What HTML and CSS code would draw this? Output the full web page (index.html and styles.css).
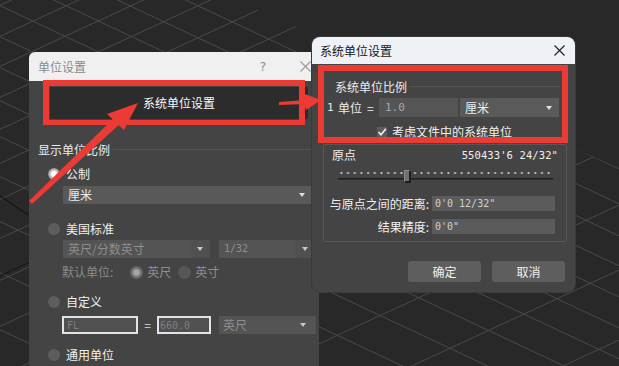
FILE: index.html
```html
<!DOCTYPE html>
<html lang="zh-CN">
<head>
<meta charset="utf-8">
<title>单位设置</title>
<link rel="stylesheet" href="styles.css">
</head>
<body>
<div class="desk">
  <svg class="grid" width="619" height="366" viewBox="0 0 619 366">
    <defs>
      <clipPath id="floor"><polygon points="0,0 235,0 619,168 619,366 0,366"/></clipPath>
    </defs>
    <g clip-path="url(#floor)" stroke="#4a4a4a" stroke-width="1" fill="none">
      <line x1="-10" y1="-292" x2="630" y2="9"/>
      <line x1="-10" y1="-247" x2="630" y2="54"/>
      <line x1="-10" y1="-204" x2="630" y2="97"/>
      <line x1="-10" y1="-164" x2="630" y2="137"/>
      <line x1="-10" y1="-127" x2="630" y2="174"/>
      <line x1="-10" y1="-92" x2="630" y2="209"/>
      <line x1="-10" y1="-60" x2="630" y2="241"/>
      <line x1="-10" y1="-30" x2="630" y2="271"/>
      <line x1="-10" y1="1" x2="630" y2="302"/>
      <line x1="-10" y1="32" x2="630" y2="333"/>
      <line x1="-10" y1="63" x2="630" y2="364"/>
      <line x1="-10" y1="96" x2="630" y2="397"/>
      <line x1="-10" y1="132" x2="630" y2="433"/>
      <line x1="-10" y1="172" x2="630" y2="473"/>
      <line x1="-10" y1="217" x2="630" y2="518"/>
      <line x1="-10" y1="268" x2="630" y2="569"/>
      <line x1="-10" y1="325" x2="630" y2="626"/>
      <line x1="-10" y1="10" x2="630" y2="-286"/>
      <line x1="-10" y1="41" x2="630" y2="-255"/>
      <line x1="-10" y1="71" x2="630" y2="-225"/>
      <line x1="-10" y1="102" x2="630" y2="-194"/>
      <line x1="-10" y1="134" x2="630" y2="-162"/>
      <line x1="-10" y1="168" x2="630" y2="-128"/>
      <line x1="-10" y1="204" x2="630" y2="-92"/>
      <line x1="-10" y1="243" x2="630" y2="-53"/>
      <line x1="-10" y1="285" x2="630" y2="-11"/>
      <line x1="-10" y1="331" x2="630" y2="35"/>
      <line x1="-10" y1="381" x2="630" y2="85"/>
      <line x1="-10" y1="436" x2="630" y2="140"/>
      <line x1="-10" y1="496" x2="630" y2="200"/>
      <line x1="-10" y1="561" x2="630" y2="265"/>
      <line x1="-10" y1="631" x2="630" y2="335"/>
      <line x1="-10" y1="705" x2="630" y2="409"/>
    </g>
    <line x1="0" y1="196" x2="30" y2="216" stroke="#0e0e0e" stroke-width="1"/>
    <line x1="0" y1="276" x2="30" y2="262" stroke="#161616" stroke-width="1"/>
  </svg>

  <section class="dlg dlg-units">
    <header class="titlebar tb-units">
      <span class="tb-title">单位设置</span>
      <span class="tb-help">?</span>
      <svg class="tb-close tb-close-dim" width="11" height="11" viewBox="0 0 11 11"><path d="M0.5 0.5 L10.5 10.5 M10.5 0.5 L0.5 10.5" stroke="#9a9a9a" stroke-width="1.2" fill="none"/></svg>
    </header>
    <div class="units-body">
      <div class="sysbtn">系统单位设置</div>
      <div class="group-head gh-display"><span>显示单位比例</span></div>
      <div class="radio-row r-metric"><i class="radio on"></i><span>公制</span></div>
      <div class="combo combo-metric"><span>厘米</span><b class="caret"></b></div>
      <div class="radio-row r-us"><i class="radio"></i><span>美国标准</span></div>
      <div class="combo-row">
        <div class="combo dis combo-frac"><span>英尺/分数英寸</span><b class="caret-box"><b class="caret"></b></b></div>
        <div class="combo dis combo-32"><span class="mono">1/32</span><b class="caret-box"><b class="caret"></b></b></div>
      </div>
      <div class="default-row">
        <span class="def-label">默认单位:</span>
        <i class="radio dim-on"></i><span class="def-opt">英尺</span>
        <i class="radio dim"></i><span class="def-opt">英寸</span>
      </div>
      <div class="radio-row r-custom"><i class="radio"></i><span>自定义</span></div>
      <div class="custom-row">
        <div class="field f-fl mono">FL</div>
        <span class="eq">=</span>
        <div class="field f-660 mono">660.0</div>
        <div class="combo dis combo-ft"><span>英尺</span><b class="caret"></b></div>
      </div>
      <div class="radio-row r-generic"><i class="radio"></i><span>通用单位</span></div>
    </div>
    <div class="mark mark-a"></div>
  </section>

  <section class="dlg dlg-sys">
    <header class="titlebar tb-sys">
      <span class="tb-title">系统单位设置</span>
      <svg class="tb-close" width="11" height="11" viewBox="0 0 11 11"><path d="M0.5 0.5 L10.5 10.5 M10.5 0.5 L0.5 10.5" stroke="#222" stroke-width="1.2" fill="none"/></svg>
    </header>
    <div class="sys-body">
      <div class="group-head gh-scale"><span>系统单位比例</span></div>
      <div class="scale-row">
        <span class="mono one">1</span>
        <span class="unit">单位</span>
        <span class="eq2">=</span>
        <div class="field f-scale mono">1.0</div>
        <div class="combo combo-cm"><span>厘米</span><b class="caret"></b></div>
      </div>
      <div class="check-row">
        <i class="check"><svg width="10" height="10" viewBox="0 0 10 10"><path d="M1.5 5 L4 7.8 L8.8 1.8" stroke="#f2f2f2" stroke-width="1.6" fill="none"/></svg></i>
        <span>考虑文件中的系统单位</span>
      </div>
      <div class="origin-box">
        <div class="origin-row"><span>原点</span><span class="mono big">550433'6 24/32"</span></div>
        <div class="slider"><i class="thumb"></i></div>
        <div class="kv-row"><span class="kv-label">与原点之间的距离:</span><div class="field f-kv mono">0'0 12/32"</div></div>
        <div class="kv-row kv-2"><span class="kv-label">结果精度:</span><div class="field f-kv mono">0'0"</div></div>
      </div>
      <div class="btn-row">
        <div class="btn">确定</div>
        <div class="btn">取消</div>
      </div>
    </div>
    <div class="mark mark-b"></div>
  </section>

  <svg class="arrows" width="619" height="366" viewBox="0 0 619 366">
    <polygon points="29,201 32,204 121,123 115,117" fill="#ec3a35"/>
    <polygon points="107,114 138,103 124,130" fill="#ec3a35"/>
    <polygon points="279,102 279,105 306,104 306,100" fill="#ec3a35"/>
    <polygon points="302,93 321,100 306,110" fill="#ec3a35"/>
  </svg>
</div>
</body>
</html>
```

FILE: styles.css
```css
* { box-sizing: border-box; }
html, body { margin: 0; padding: 0; }
body {
  width: 619px;
  height: 366px;
  overflow: hidden;
  background: #282828;
  font-family: "Noto Sans CJK SC", "Noto Sans", sans-serif;
  font-size: 12px;
  color: #e8e8e8;
}
.desk { position: relative; width: 619px; height: 366px; overflow: hidden; background: #282828; }
.grid { position: absolute; left: 0; top: 0; }
.arrows { position: absolute; left: 0; top: 0; z-index: 5; pointer-events: none; }

.mono { font-family: "DejaVu Sans Mono", "Liberation Mono", monospace; font-size: 10px; }

/* dialogs */
.dlg { position: absolute; background: #444444; }
.dlg-units {
  left: 29px; top: 52px; width: 290px; height: 330px;
  border-radius: 6px 6px 0 0; overflow: hidden;
}
.dlg-sys {
  left: 312px; top: 37px; width: 263px; height: 255px;
  border-radius: 8px; overflow: hidden; z-index: 2;
  box-shadow: 0 0 0 1px #3a3a3a;
}

.titlebar { display: flex; align-items: center; line-height: 14px; }
.tb-units { height: 29px; background: #f0f0f0; padding-left: 9px; color: #8a8a8a; }
.tb-units .tb-help { margin-left: auto; color: #8c8c8c; font-family: "DejaVu Sans", sans-serif; font-size: 12px; }
.tb-units .tb-close { margin-left: 34px; margin-right: 8px; }
.tb-sys { height: 27px; background: #eef1f5; padding-left: 8px; color: #151515; }
.tb-sys .tb-close { margin-left: auto; margin-right: 10px; }

/* red annotation boxes */
.mark { position: absolute; border: 6px solid #ec3a35; pointer-events: none; }
.mark-a { left: 14px; top: 28px; width: 262px; height: 45px; border-width: 6px 6px 5px 6px; }
.mark-b { left: 6px; top: 28px; width: 250px; height: 78px; z-index: 3; }

/* left dialog body */
.units-body { padding-top: 6px; }
.sysbtn {
  margin-left: 21px; width: 258px; height: 32px;
  background: #2c2c2c; color: #fafafa;
  display: flex; align-items: center; justify-content: center;
  line-height: 14px;
}
.group-head { display: flex; align-items: center; gap: 3px; height: 14px; line-height: 14px; color: #ececec; }
.group-head::after { content: ""; flex: 1; border-top: 1px solid #545454; margin-top: -1px; }
.gh-display { margin-top: 24px; margin-left: 9px; }

.radio-row { display: flex; align-items: center; gap: 6px; height: 14px; line-height: 14px; margin-left: 19px; color: #f0f0f0; }
.r-metric { margin-top: 10px; }
.r-us { margin-top: 18px; }
.r-custom { margin-top: 16px; }
.r-generic { margin-top: 14px; }

.radio { display: block; width: 12px; height: 12px; border-radius: 50%; background: #5d5d5d; flex: none; }
.radio.on { background: radial-gradient(circle at 50% 50%, #ffffff 0, #ffffff 2.5px, #cfcfcf 3.5px, #8c8c8c 6px); }
.radio.dim-on { background: radial-gradient(circle at 50% 50%, #a8a8a8 0, #a8a8a8 2.5px, #7a7a7a 4px, #626262 6px); }
.radio.dim { background: #575757; }

.combo {
  position: relative; height: 18px; background: #595959;
  display: flex; align-items: center; padding-left: 5px;
  line-height: 14px; color: #ededed;
}
.caret {
  display: block; width: 0; height: 0;
  border-left: 3px solid transparent; border-right: 3px solid transparent;
  border-top: 4px solid #e0e0e0;
}
.combo > .caret { position: absolute; right: 10px; top: 7px; }
.combo-metric { margin-top: 5px; margin-left: 34px; width: 253px; }
.combo-metric > .caret { right: 11px; }

.combo-row { display: flex; gap: 9px; margin-top: 4px; margin-left: 34px; }
.combo.dis { background: #545454; color: #8e8e8e; }
.combo.dis .caret { border-top-color: #c8c8c8; }
.caret-box {
  position: absolute; right: 0; top: 0; bottom: 0; width: 20px;
  background: #505050; display: flex; align-items: center; justify-content: center;
}
.combo-frac { width: 147px; }
.combo-32 { width: 100px; }
.combo-32 .caret-box { right: 4px; }

.default-row { display: flex; align-items: center; height: 14px; line-height: 14px; margin-top: 7px; margin-left: 33px; color: #8a8a8a; }
.def-label { margin-right: 17px; }
.default-row .radio { width: 13px; height: 13px; }
.def-opt { margin-left: 4px; margin-right: 7px; color: #8e8e8e; }

.custom-row { display: flex; align-items: center; margin-top: 7px; margin-left: 33px; height: 18px; }
.field {
  height: 18px; display: flex; align-items: center; padding-left: 3px;
  color: #7e7e7e; background: #505050;
}
.f-fl { width: 76px; border: 2px solid #e4e4e4; }
.eq { width: 19px; text-align: center; color: #dcdcdc; line-height: 14px; }
.f-660 { width: 54px; border: 2px solid #e4e4e4; padding-left: 1px; }
.combo-ft { margin-left: 8px; width: 97px; padding-left: 4px; }

/* system units dialog */
.sys-body { display: flex; flex-direction: column; }
.gh-scale { margin-top: 16px; margin-left: 23px; margin-right: 15px; }

.scale-row { display: flex; align-items: center; height: 19px; margin-top: 4px; margin-left: 15px; line-height: 14px; color: #ececec; }
.scale-row .one { width: 11px; font-size: 11px; }
.scale-row .unit { width: 29px; }
.scale-row .eq2 { width: 12px; }
.f-scale { width: 79px; height: 19px; background: #555555; color: #a8a8a8; padding-left: 6px; font-size: 11px; }
.combo-cm { margin-left: 2px; width: 99px; height: 19px; background: #5a5a5a; padding-left: 5px; }
.combo-cm > .caret { right: 7px; top: 8px; }

.check-row { display: flex; align-items: center; gap: 5px; height: 14px; line-height: 14px; margin-top: 8px; margin-left: 65px; color: #f0f0f0; }
.check { display: flex; align-items: center; justify-content: center; width: 10px; height: 10px; background: #5b5b5b; }

.origin-box {
  margin-top: 5px; margin-left: 11px; width: 244px; height: 98px;
  border: 1px solid #575757; border-radius: 2px;
  padding: 0 8px 0 8px;
}
.origin-row { display: flex; justify-content: space-between; align-items: center; height: 14px; line-height: 14px; margin-top: 3px; color: #f0f0f0; }
.origin-row .big { font-size: 10.5px; letter-spacing: 0.1px; }

.slider {
  position: relative; height: 15px; margin: 7px 5px 0 6px;
  background:
    radial-gradient(circle, #c8c8c8 0 0.9px, transparent 1.2px) 0 3px / 6.7px 2px repeat-x,
    linear-gradient(#1f1f1f, #1f1f1f) 0 9px / 100% 1.5px no-repeat;
}
.thumb {
  position: absolute; left: 66px; top: 1px; width: 7px; height: 13px;
  background: #707070; border-right: 2px solid #1e1e1e; border-bottom: 2px solid #1e1e1e;
  border-top: 1px solid #8a8a8a; border-left: 1px solid #8a8a8a;
}

.kv-row { display: grid; grid-template-columns: 102px 123px; column-gap: 3px; align-items: center; margin-top: 12px; margin-left: -5px; }
.kv-2 { margin-top: 8px; }
.kv-label { text-align: right; line-height: 14px; color: #f0f0f0; }
.f-kv { height: 15px; background: #5b5b5b; color: #cfcfcf; padding-left: 3px; }

.btn-row { display: flex; justify-content: flex-end; gap: 11px; margin-top: 19px; padding-right: 10px; }
.btn {
  width: 73px; height: 21px; border-radius: 3px; background: #5e5e5e;
  display: flex; align-items: center; justify-content: center; line-height: 14px; color: #f0f0f0;
}
```
